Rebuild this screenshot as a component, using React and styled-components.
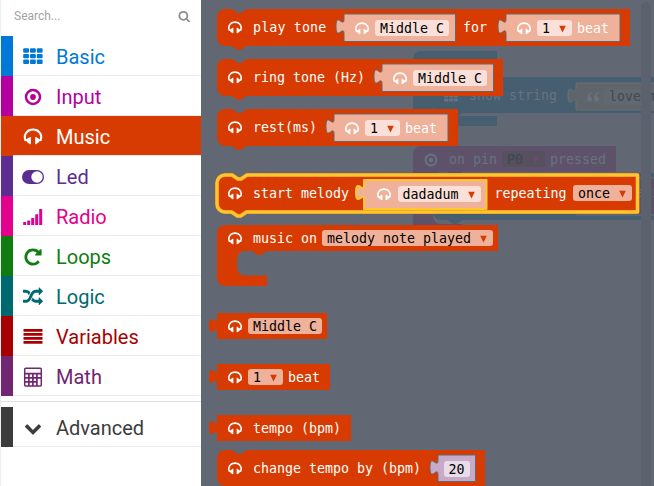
import React from "react";
import styled, { createGlobalStyle } from "styled-components";

const ORANGE = "#D83B01";
const DIM = "#616873";

const GlobalStyle = createGlobalStyle`
  * { box-sizing: border-box; }
  body { margin: 0; overflow: hidden; background: #fff; }
`;

const Page = styled.main`
  display: flex;
  width: 654px;
  height: 486px;
  overflow: hidden;
`;

/* ---------- Toolbox ---------- */

const Toolbox = styled.aside`
  width: 201px;
  flex: none;
  border-left: 1px solid #ecf0f1;
  background: #fff;
  font-family: Roboto, sans-serif;
`;

const SearchBox = styled.div`
  display: flex;
  align-items: center;
  justify-content: space-between;
  height: 36px;
  padding: 0 11px 4px 13px;
  font-size: 12px;
  color: #a3a3a3;

  svg { color: #8f8f8f; }
`;

const Category = styled.div`
  display: flex;
  align-items: center;
  height: 40px;
  border-left: 12px solid ${(p) => p.$color};
  color: ${(p) => (p.$active ? "#fff" : p.$color)};
  background: ${(p) => (p.$active ? p.$color : "#fff")};
  font-size: 20px;
  line-height: 24px;
  box-shadow: inset 0 -1px 0 #ebebeb;
`;

const CategoryIcon = styled.span`
  display: flex;
  align-items: center;
  justify-content: center;
  width: 24px;
  height: 26px;
  margin: 0 11px 0 8px;
  padding-top: ${(p) => p.$drop}px;
`;

const CategoryName = styled.span`
  padding-top: 2px;
`;

const Divider = styled.div`
  height: 11px;
  padding-top: 5px;

  &::after {
    content: "";
    display: block;
    height: 1px;
    background: #dddfe0;
  }
`;

/* ---------- Icons ---------- */

const Icon = ({ size = 20, box = "0 0 1792 1792", d }) => (
  <svg width={size} height={size} viewBox={box} fill="currentColor">
    <path d={d} />
  </svg>
);

const HEADPHONES =
  "M1728 886q0 166-60 314l-20 49-185 33q-22 83-90.5 136.5t-156.5 53.5v32q0 14-9 23t-23 9h-64q-14 0-23-9t-9-23v-576q0-14 9-23t23-9h64q14 0 23 9t9 23v32q71 0 130 35.5t93 95.5l68-12q29-95 29-193 0-148-88-279t-236.5-209-315.5-78-315.5 78-236.5 209-88 279q0 98 29 193l68 12q34-60 93-95.5t130-35.5v-32q0-14 9-23t23-9h64q14 0 23 9t9 23v576q0 14-9 23t-23 9h-64q-14 0-23-9t-9-23v-32q-88 0-156.5-53.5t-90.5-136.5l-185-33-20-49q-60-148-60-314 0-151 67-291t179-242.5 266-163.5 320-61 320 61 266 163.5 179 242.5 67 291z";
const SEARCH =
  "M1216 832q0-185-131.5-316.5t-316.5-131.5-316.5 131.5-131.5 316.5 131.5 316.5 316.5 131.5 316.5-131.5 131.5-316.5zm512 832q0 52-38 90t-90 38q-54 0-90-38l-343-342q-179 124-399 124-143 0-273.5-55.5t-225-150-150-225-55.5-273.5 55.5-273.5 150-225 225-150 273.5-55.5 273.5 55.5 225 150 150 225 55.5 273.5q0 220-124 399l343 343q37 37 37 90z";
const REPEAT =
  "M1664 256v448q0 26-19 45t-45 19h-448q-42 0-59-40-17-39 14-69l138-138q-148-137-349-137-104 0-198.5 40.5t-163.5 109.5-109.5 163.5-40.5 198.5 40.5 198.5 109.5 163.5 163.5 109.5 198.5 40.5q119 0 225-52t179-147q7-10 23-12 15 0 25 9l137 138q9 8 9.5 20.5t-7.5 22.5q-109 132-264 204.5t-327 72.5q-156 0-298-61t-245-164-164-245-61-298 61-298 164-245 245-164 298-61q147 0 284.5 55.5t244.5 156.5l130-129q29-31 70-14 39 17 39 59z";
const SHUFFLE =
  "M666 481q-60 92-137 273-22-45-37-72.5t-40.5-63.5-51-56.5-63-35-81.5-14.5h-224q-14 0-23-9t-9-23v-192q0-14 9-23t23-9h224q250 0 410 225zm1126 799q0 14-9 23l-320 320q-9 9-23 9-13 0-22.5-9.5t-9.5-22.5v-192q-32 0-85 .5t-81 1-73-1-71-5-64-10.5-63-18.5-58-28.5-59-40-55-53.5-56-69.5q59-93 136-273 22 45 37 72.5t40.5 63.5 51 56.5 63 35 81.5 14.5h256v-192q0-14 9-23t23-9q12 0 24 10l319 319q9 9 9 23zm0-896q0 14-9 23l-320 320q-9 9-23 9-13 0-22.5-9.5t-9.5-22.5v-192h-256q-48 0-87 15t-69 45-51 61.5-45 77.5q-32 62-78 171-29 66-49.5 111t-54 105-64 100-74 83-90 68.5-106.5 42-128 16.5h-224q-14 0-23-9t-9-23v-192q0-14 9-23t23-9h224q48 0 87-15t69-45 51-61.5 45-77.5q32-62 78-171 29-66 49.5-111t54-105 64-100 74-83 90-68.5 106.5-42 128-16.5h256v-192q0-14 9-23t23-9q12 0 24 10l319 319q9 9 9 23z";
const CHEVRON =
  "M1683 808l-742 741q-19 19-45 19t-45-19l-742-741q-19-19-19-45.5t19-45.5l166-165q19-19 45-19t45 19l531 531 531-531q19-19 45-19t45 19l166 165q19 19 19 45.5t-19 45.5z";

const GridIcon = ({ width = 20, height = 16 }) => (
  <svg width={width} height={height} viewBox="0 0 20 16" fill="currentColor">
    {[0, 5.6, 11.2].map((y) =>
      [0.2, 7, 13.8].map((x) => (
        <rect key={`${x}-${y}`} x={x} y={y + 0.3} width="5.8" height="4.4" rx="1" />
      ))
    )}
  </svg>
);

const TargetIcon = ({ size = 18 }) => (
  <svg width={size} height={size} viewBox="0 0 18 18">
    <circle cx="9" cy="9" r="7" fill="none" stroke="currentColor" strokeWidth="2.5" />
    <circle cx="9" cy="9" r="2.9" fill="currentColor" />
  </svg>
);

const ToggleIcon = () => (
  <svg width="22" height="16" viewBox="0 0 22 16">
    <rect x="0" y="1" width="22" height="14" rx="7" fill="currentColor" />
    <circle cx="15" cy="8" r="5.7" fill="#fff" />
  </svg>
);

const SignalIcon = () => (
  <svg width="20" height="18" viewBox="0 0 20 18" fill="currentColor">
    <rect x="0.2" y="14" width="3" height="3" rx="0.5" />
    <rect x="4.2" y="12.5" width="3" height="4.5" rx="0.5" />
    <rect x="8.2" y="10" width="3" height="7" rx="0.5" />
    <rect x="12.2" y="6.2" width="3" height="10.8" rx="0.5" />
    <rect x="16.2" y="1" width="3" height="16" rx="0.5" />
  </svg>
);

const LinesIcon = () => (
  <svg width="20" height="16" viewBox="0 0 20 16" fill="currentColor">
    {[1, 5, 9, 13].map((y) => (
      <rect key={y} x="0.5" y={y} width="19" height="2.7" rx="0.5" />
    ))}
  </svg>
);

const CalculatorIcon = () => (
  <svg width="20" height="20" viewBox="0 0 20 20">
    <rect x="1.7" y="1.2" width="16.6" height="17.8" rx="1" fill="none" stroke="currentColor" strokeWidth="1.5" />
    <path
      d="M2 6.7H18M2 10.8H18M2 14.9H14M5.9 6.7V19M9.9 6.7V19M13.9 6.7V19"
      stroke="currentColor"
      strokeWidth="1.7"
      fill="none"
    />
  </svg>
);

/* ---------- Workspace and flyout ---------- */

const Workspace = styled.section`
  position: relative;
  flex: 1;
  height: 486px;
  background: ${DIM};
  overflow: hidden;
  font-family: "DejaVu Sans Mono", monospace;
  font-size: 13.3px;
  line-height: 16px;
  white-space: pre;
`;

const Scrollbar = styled.div`
  position: absolute;
  left: 440px;
  top: 2px;
  width: 10px;
  height: 500px;
  border-radius: 5px;
  background: #5b626d;
`;

const Flyout = styled.div`
  position: relative;
  display: flex;
  flex-direction: column;
  align-items: flex-start;
  padding: 9px 0 0 16px;
`;

const BlockBox = styled.div`
  position: ${(p) => (p.$free ? "absolute" : "relative")};
  left: ${(p) => (p.$free ? `${p.$x}px` : "auto")};
  top: ${(p) => (p.$free ? `${p.$y}px` : "auto")};
  display: flex;
  align-items: flex-start;
  flex: none;
  width: ${(p) => p.$w}px;
  height: ${(p) => p.$h}px;
  margin-bottom: ${(p) => p.$after || 0}px;
  padding: ${(p) => p.$top}px 0 0 11px;
  color: ${(p) => p.$ink || "#fff"};
`;

const ValueBox = styled.div`
  position: relative;
  display: flex;
  align-items: flex-start;
  flex: none;
  width: ${(p) => p.$w}px;
  height: ${(p) => p.$h || 28}px;
  margin: ${(p) => p.$top ?? -5}px 0 0 ${(p) => p.$gap}px;
  padding: 6px 0 0 ${(p) => p.$pad ?? 11}px;
`;

const Outline = styled.svg`
  position: absolute;
  left: 0;
  top: 0;
  overflow: visible;
`;

const Glyph = styled.span`
  position: relative;
  display: flex;
  align-items: center;
  flex: none;
  width: 14px;
  height: 17px;
  margin-right: ${(p) => p.$gap ?? 11}px;
`;

const Label = styled.span`
  position: relative;
  flex: none;
  width: ${(p) => (p.$w ? `${p.$w}px` : "auto")};
  padding-top: 1px;
  letter-spacing: ${(p) => p.$track || 0}px;
`;

const Field = styled.span`
  position: relative;
  display: flex;
  align-items: center;
  justify-content: space-between;
  flex: none;
  width: ${(p) => p.$w}px;
  height: 16px;
  margin: ${(p) => p.$top || 0}px ${(p) => p.$after || 0}px 0 0;
  padding: 1px 5px 0;
  border-radius: 3px;
  color: ${(p) => p.$ink || "#000"};
  background: ${(p) => p.$fill || "#F0B19A"};
`;

const ArrowTone = styled.span`
  display: flex;
  margin-right: 1px;
  color: ${(p) => p.$tone || ORANGE};
`;

const Arrow = () => (
  <svg width="7" height="8" viewBox="0 0 7 8" fill="currentColor">
    <path d="M0.2 0.8H6.8L3.5 7.4Z" />
  </svg>
);

const stackPath = (w, h) =>
  `M0,8A8,8 0 0,1 8,0H15l6,4h3l6,-4H${w}V${h}H29.5l-6,4h-3l-6,-4H8a8,8 0 0,1 -8,-8z`;
const valuePath = (w, h) =>
  `M0,0H${w}V${h}H0V20c0,-10 -8,8 -8,-7.5s8,2.5 8,-7.5z`;
const containerPath = (w, head, inner, total, foot) =>
  `M0,8A8,8 0 0,1 8,0H${w}V${head}H50l-6,4h-3l-6,-4H28a8,8 0 0,0 -8,8V${inner - 8}a8,8 0 0,0 8,8H${foot}V${total}H8a8,8 0 0,1 -8,-8z`;

const Shape = ({ d, fill = ORANGE, stroke, width = 1 }) => (
  <Outline width="1" height="1">
    <path d={d} fill={fill} stroke={stroke} strokeWidth={width} strokeLinejoin="round" />
  </Outline>
);

const MusicGlyph = ({ gap }) => (
  <Glyph $gap={gap}>
    <Icon size={14.5} box="64 0 1664 1664" d={HEADPHONES} />
  </Glyph>
);

const Block = ({ w, h = 37, after, top = 10, gap, kind = "stack", children }) => (
  <BlockBox $w={w} $h={h} $after={after} $top={top}>
    <Shape d={kind === "value" ? valuePath(w, h) : stackPath(w, h)} />
    <MusicGlyph gap={gap} />
    {children}
  </BlockBox>
);

const Value = ({
  w,
  gap,
  stroke = DIM,
  strokeWidth = 1,
  fill = "#F0B19A",
  h = 27.5,
  top,
  pad = 11,
  plain,
  children,
}) => (
  <ValueBox $w={w} $gap={gap} $h={h} $top={top} $pad={plain ? 6 : pad}>
    <Shape d={valuePath(w, h)} fill={fill} stroke={stroke} width={strokeWidth} />
    {!plain && <MusicGlyph gap={6.5} />}
    {children}
  </ValueBox>
);

const Dropdown = ({ text, tone, ...rest }) => (
  <Field {...rest}>
    <span>{text}</span>
    <ArrowTone $tone={tone}>
      <Arrow />
    </ArrowTone>
  </Field>
);

const PALE = "#FAE0D8";
const BLUE = "#475D70";
const PURPLE = "#5E526B";
const FAINT = "#68737F";

const CanvasBlocks = () => (
  <>
    <BlockBox $free $x={212} $y={51} $w={84} $h={75} $top={5} $ink={FAINT}>
      <Shape d={containerPath(84, 26, 65, 75, 84)} fill={BLUE} />
    </BlockBox>
    <BlockBox $free $x={232} $y={77} $w={240} $h={36} $top={10} $ink={FAINT}>
      <Shape d={stackPath(240, 36)} fill={BLUE} />
      <Glyph $gap={11}>
        <GridIcon width={15} height={12} />
      </Glyph>
      <Label $w={97}>show string</Label>
      <ValueBox $w={100} $gap={10} $top={-4.5} $h={27} $pad={11}>
        <Shape d={valuePath(100, 27)} fill="#5F656B" stroke="#68707a" />
        <Glyph $gap={3}>
          <svg width="13" height="10" viewBox="0 0 13 10" fill="currentColor">
            <path d="M5 0C1.5 1 0 4 0 7a2.5 2.5 0 1 0 2.5-2.5C2.5 3 3.5 1.5 5 1zM12 0C8.5 1 7 4 7 7a2.5 2.5 0 1 0 2.5-2.5C9.5 3 10.5 1.5 12 1z" />
          </svg>
        </Glyph>
        <Field $w={80} $fill="#61686f" $ink="#424a55">love me</Field>
      </ValueBox>
    </BlockBox>
    <BlockBox $free $x={212} $y={146} $w={203} $h={92} $top={5} $ink={FAINT}>
      <Shape d={containerPath(203, 26, 78, 92, 50)} fill={PURPLE} />
      <Glyph>
        <TargetIcon size={14} />
      </Glyph>
      <Label $w={53}>on pin</Label>
      <Dropdown text="P0" $w={43} $after={5} $fill="#56505F" $ink="#3E4653" tone="#6E4A72" />
      <Label>pressed</Label>
    </BlockBox>
    <BlockBox $free $x={232} $y={173} $w={240} $h={47} $top={20} $ink={FAINT}>
      <Shape d={stackPath(240, 47)} fill={BLUE} />
      <ValueBox $w={100} $gap={133} $top={-15} $h={37}>
        <Shape d={valuePath(100, 37)} fill={PURPLE} stroke="#68707a" />
        <Label $w={48} />
        <Label>adi</Label>
      </ValueBox>
    </BlockBox>
  </>
);

const CATEGORIES = [
  ["Basic", "#0078D7", <GridIcon />, 0],
  ["Input", "#B4009E", <TargetIcon />, 2],
  ["Music", ORANGE, <Icon d={HEADPHONES} />, 2],
  ["Led", "#5C2D91", <ToggleIcon />, 2],
  ["Radio", "#E3008C", <SignalIcon />, 2],
  ["Loops", "#107C10", <Icon d={REPEAT} />, 2],
  ["Logic", "#006970", <Icon d={SHUFFLE} />, 2],
  ["Variables", "#A80000", <LinesIcon />, 0],
  ["Math", "#712672", <CalculatorIcon />, 2],
];

const CategoryRow = ({ name, color, icon, drop, active }) => (
  <Category $color={color} $active={active}>
    <CategoryIcon $drop={drop}>{icon}</CategoryIcon>
    <CategoryName>{name}</CategoryName>
  </Category>
);

const SelectedBlock = ({ children }) => (
  <BlockBox $w={420.5} $h={37} $after={13} $top={10}>
    <Shape d={stackPath(420.5, 37)} stroke="#EE8A1C" width={4} />
    <Shape d={stackPath(420.5, 37)} fill="none" stroke="#FFC72E" width={3} />
    <MusicGlyph />
    {children}
  </BlockBox>
);

export default function App() {
  return (
    <Page>
      <GlobalStyle />
      <Toolbox>
        <SearchBox>
          <span>Search...</span>
          <Icon size={12.5} d={SEARCH} />
        </SearchBox>
        {CATEGORIES.map(([name, color, icon, drop]) => (
          <CategoryRow key={name} name={name} color={color} icon={icon} drop={drop} active={name === "Music"} />
        ))}
        <Divider />
        <CategoryRow name="Advanced" color="#3C3C3C" icon={<Icon size={18} d={CHEVRON} />} drop={2} />
      </Toolbox>
      <Workspace>
        <CanvasBlocks />
        <Scrollbar />
        <Flyout>
          <Block w={413} after={13}>
            <Label $w={80} $track={0.15}>play tone</Label>
            <Value w={111.5} gap={10.5}>
              <Field $w={74} $fill={PALE}>Middle C</Field>
            </Value>
            <Label $w={30}>{" "}for</Label>
            <Value w={114} gap={20.5}>
              <Dropdown text="1" $w={35} $after={5} $fill={PALE} />
              <Label>beat</Label>
            </Value>
          </Block>
          <Block w={286} after={13}>
            <Label $w={118}>ring tone (Hz)</Label>
            <Value w={111.5} gap={10.5}>
              <Field $w={74} $fill={PALE}>Middle C</Field>
            </Value>
          </Block>
          <Block w={241} after={29}>
            <Label $w={70}>rest(ms)</Label>
            <Value w={114} gap={10.5}>
              <Dropdown text="1" $w={35} $after={5} $fill={PALE} />
              <Label>beat</Label>
            </Value>
          </Block>
          <SelectedBlock>
            <Label $w={100}>start melody</Label>
            <Value w={122.5} h={29} top={-5} gap={11} stroke="#FFC72E" strokeWidth={2} pad={13}>
              <Dropdown text="dadadum" $w={83} $fill={PALE} />
            </Value>
            <Label $w={86.5}>{" "}repeating</Label>
            <Dropdown text="once" $w={59} />
          </SelectedBlock>
          <BlockBox $w={281} $h={61} $after={27} $top={5}>
            <Shape d={containerPath(281, 26, 50.5, 61, 50)} />
            <MusicGlyph />
            <Label $w={69}>music on</Label>
            <Dropdown text="melody note played" $w={171} />
          </BlockBox>
          <Block kind="value" w={110} h={26} after={25} top={5} gap={6}>
            <Field $w={74}>Middle C</Field>
          </Block>
          <Block kind="value" w={113} h={26} after={25} top={5} gap={6}>
            <Dropdown text="1" $w={35} $after={5} />
            <Label>beat</Label>
          </Block>
          <Block kind="value" w={134} h={26} after={9} top={5}>
            <Label>tempo (bpm)</Label>
          </Block>
          <Block w={268} h={36}>
            <Label $w={174}>change tempo by (bpm)</Label>
            <Value w={37.5} h={26.5} gap={10.5} plain fill="#C6AAC8">
              <Field $w={26} $fill="#E7DCE8">20</Field>
            </Value>
          </Block>
        </Flyout>
      </Workspace>
    </Page>
  );
}
